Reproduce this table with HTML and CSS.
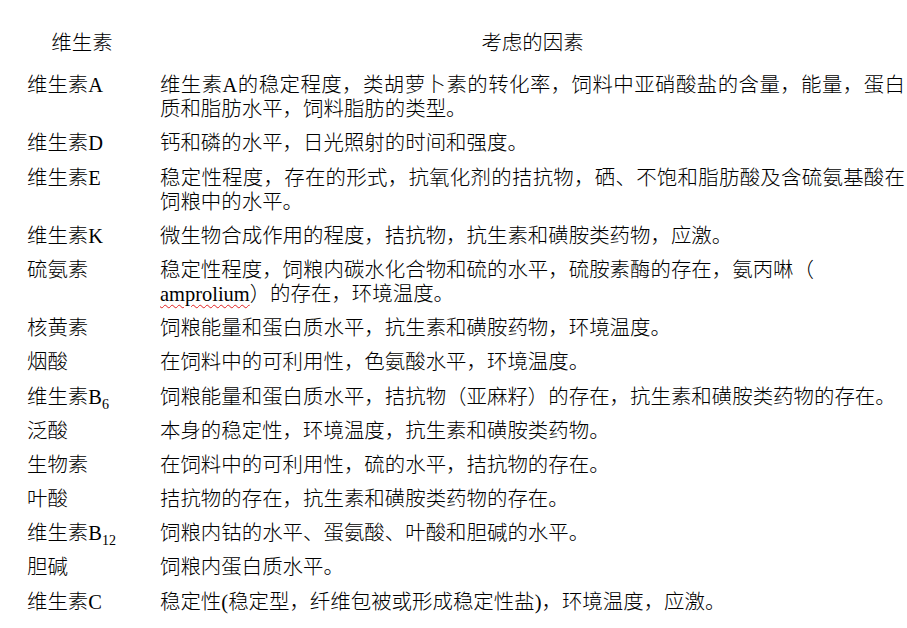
FILE: index.html
```html
<!DOCTYPE html>
<html lang="zh-CN">
<head>
<meta charset="utf-8">
<title>维生素 考虑的因素</title>
<link rel="stylesheet" href="styles.css">
</head>
<body>
<div class="sheet">
  <div class="head">维生素</div>
  <div class="head">考虑的因素</div>

  <div class="name">维生素<span class="lat">A</span></div>
  <div class="desc">维生素<span class="lat">A</span>的稳定程度，类胡萝卜素的转化率，饲料中亚硝酸盐的含量，能量，蛋白质和脂肪水平，饲料脂肪的类型。</div>

  <div class="name">维生素<span class="lat">D</span></div>
  <div class="desc">钙和磷的水平，日光照射的时间和强度。</div>

  <div class="name">维生素<span class="lat">E</span></div>
  <div class="desc">稳定性程度，存在的形式，抗氧化剂的拮抗物，硒、不饱和脂肪酸及含硫氨基酸在饲粮中的水平。</div>

  <div class="name">维生素<span class="lat">K</span></div>
  <div class="desc">微生物合成作用的程度，拮抗物，抗生素和磺胺类药物，应激。</div>

  <div class="name">硫氨素</div>
  <div class="desc">稳定性程度，饲粮内碳水化合物和硫的水平，硫胺素酶的存在，氨丙啉（<br><span class="lat spell">amprolium</span>）的存在，环境温度。</div>

  <div class="name">核黄素</div>
  <div class="desc">饲粮能量和蛋白质水平，抗生素和磺胺药物，环境温度。</div>

  <div class="name">烟酸</div>
  <div class="desc">在饲料中的可利用性，色氨酸水平，环境温度。</div>

  <div class="name">维生素<span class="lat">B<sub>6</sub></span></div>
  <div class="desc">饲粮能量和蛋白质水平，拮抗物（亚麻籽）的存在，抗生素和磺胺类药物的存在。</div>

  <div class="name">泛酸</div>
  <div class="desc">本身的稳定性，环境温度，抗生素和磺胺类药物。</div>

  <div class="name">生物素</div>
  <div class="desc">在饲料中的可利用性，硫的水平，拮抗物的存在。</div>

  <div class="name">叶酸</div>
  <div class="desc">拮抗物的存在，抗生素和磺胺类药物的存在。</div>

  <div class="name">维生素<span class="lat">B<sub>12</sub></span></div>
  <div class="desc">饲粮内钴的水平、蛋氨酸、叶酸和胆碱的水平。</div>

  <div class="name">胆碱</div>
  <div class="desc">饲粮内蛋白质水平。</div>

  <div class="name">维生素<span class="lat">C</span></div>
  <div class="desc">稳定性<span class="lat">(</span>稳定型，纤维包被或形成稳定性盐<span class="lat">)</span>，环境温度，应激。</div>
</div>
</body>
</html>
```

FILE: styles.css
```css
html, body {
  margin: 0;
  padding: 0;
  background: #ffffff;
}

body {
  overflow: hidden;
  color: #000000;
  font-family: "Liberation Serif", "Noto Sans CJK SC", serif;
  font-size: 20.45px;
  font-weight: 300;
  line-height: 24px;
}

.sheet {
  display: grid;
  grid-template-columns: 110px 745px;
  column-gap: 23px;
  row-gap: 10.2px;
  padding: 31px 0 0 27px;
}

.head {
  text-align: center;
  margin-bottom: 8px;
}

.desc {
  text-align: justify;
}

.lat {
  font-weight: 400;
}

sub {
  font-size: 14px;
  line-height: 0;
  vertical-align: -5px;
}

.spell {
  text-decoration: underline wavy #e02020;
  text-decoration-thickness: 1px;
  text-underline-offset: 3px;
}
```
